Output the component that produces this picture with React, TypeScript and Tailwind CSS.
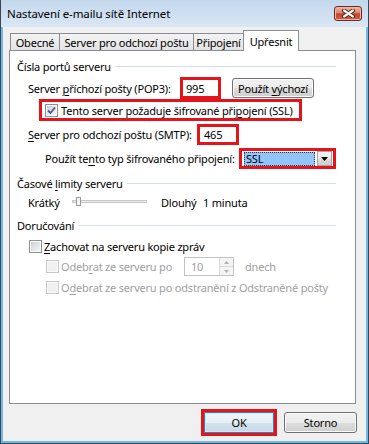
import type { ReactNode } from 'react'

function U({ children }: { children: ReactNode }) {
  return <span className="underline decoration-1 underline-offset-[2px]">{children}</span>
}

function RedBox({ className = '', children }: { className?: string; children?: ReactNode }) {
  return <div className={`border-[3px] border-[#e3141c] bg-white ${className}`}>{children}</div>
}

function Checkbox({ checked = false, disabled = false }: { checked?: boolean; disabled?: boolean }) {
  return (
    <span
      className={`relative block shrink-0 w-[13px] h-[13px] border p-px ${
        disabled ? 'border-[#c8c8c8] bg-[#fafafa]' : 'border-[#8e8f8f] bg-white'
      }`}
    >
      <span
        className={`block w-full h-full ${
          disabled ? 'bg-[#f0f0f0]' : 'bg-gradient-to-br from-[#cbcfd5] to-[#f6f6f6]'
        }`}
      />
      {checked && (
        <svg className="absolute left-0 top-0" width="11" height="11" viewBox="0 0 11 11">
          <path d="M2 5.5 L4.5 8 L9 2.5" fill="none" stroke="#4a5c8e" strokeWidth="1.8" />
        </svg>
      )}
    </span>
  )
}

function Group({ title }: { title: ReactNode }) {
  return (
    <div className="flex items-center h-[16px]">
      <span>{title}</span>
      <span className="flex-1 h-px bg-[#d5dfe5] ml-[4px]" />
    </div>
  )
}

function Button({ className = '', children }: { className?: string; children: ReactNode }) {
  return (
    <div
      className={`flex items-center justify-center rounded-[3px] border border-[#707070] shadow-[inset_0_0_0_1px_#fbfbfb] bg-[linear-gradient(to_bottom,#f2f2f2_0%,#ebebeb_50%,#dddddd_50%,#cfcfcf_100%)] ${className}`}
    >
      {children}
    </div>
  )
}

export default function App() {
  return (
    <div className="w-[369px] h-[444px] bg-[#3a4753] px-px pb-px flex flex-col font-['Noto_Sans',sans-serif] text-[11px] tracking-[-0.2px] leading-none text-black select-none">
      {/* Title bar */}
      <div className="h-[27px] shrink-0 flex items-center pl-[6px] pr-[6px] bg-gradient-to-b from-[#c3d7ec] to-[#dae7f4]">
        <span className="text-[11.5px] tracking-[-0.1px]">Nastavení e-mailu sítě Internet</span>
        <div className="ml-auto w-[28px] h-[15px] rounded-[3px] border border-[#6b2b20] flex items-center justify-center bg-[linear-gradient(to_bottom,#edb6a8_0%,#df826f_45%,#c6432b_52%,#d65e44_100%)] shadow-[inset_0_0_0_1px_#f0b4a6]">
          <svg width="13" height="9" viewBox="0 0 13 9">
            <path d="M2 1.5 L11 7.5 M11 1.5 L2 7.5" stroke="#4a1d15" strokeWidth="4" strokeLinecap="round" />
            <path d="M2 1.5 L11 7.5 M11 1.5 L2 7.5" stroke="#ffffff" strokeWidth="2.2" strokeLinecap="round" />
          </svg>
        </div>
      </div>

      {/* Body */}
      <div className="flex-1 flex flex-col bg-[#f0f0f0] border-l-2 border-r-2 border-b-2 border-[#6cbbe8]">
        {/* Tabs */}
        <div className="flex items-end h-[21px] mt-[3px] pl-[7px] -mb-px relative z-10">
          <div className="w-[50px] h-[17px] mb-px flex items-center justify-center border border-b-0 border-[#898c95] bg-gradient-to-b from-[#f3f3f3] to-[#e3e3e3]">
            Obecné
          </div>
          <div className="w-[135px] h-[17px] mb-px -ml-px flex items-center justify-center border border-b-0 border-[#898c95] bg-gradient-to-b from-[#f3f3f3] to-[#e3e3e3]">
            Server pro odchozí poštu
          </div>
          <div className="w-[51px] h-[17px] mb-px -ml-px flex items-center justify-center border border-b-0 border-[#898c95] bg-gradient-to-b from-[#f3f3f3] to-[#e3e3e3]">
            Připojení
          </div>
          <div className="w-[56px] h-[21px] -ml-px flex items-center justify-center border border-b-0 border-[#898c95] bg-white">
            Upřesnit
          </div>
        </div>

        {/* Tab panel */}
        <div className="ml-[6px] w-[347px] h-[354px] border border-[#898c95] bg-white pl-[7px] pr-[19px] pt-[7px] flex flex-col">
          <Group title="Čísla portů serveru" />

          <div className="flex items-center h-[22px] mt-[3px]">
            <span className="ml-[11px] w-[152px] shrink-0">
              Server <U>p</U>říchozí pošty (POP3):
            </span>
            <RedBox className="w-[41px] h-[22px] flex items-center pl-[3px]">995</RedBox>
            <Button className="ml-[11px] w-[82px] h-[20px]">
              Použít&nbsp;<U>v</U>ýchozí
            </Button>
          </div>

          <div className="flex h-[22px]">
            <RedBox className="ml-[22px] w-[263px] h-[22px] flex items-center pl-[3px]">
              <Checkbox checked />
              <span className="ml-[3px]">
                Tento server požaduje šifrované při<U>p</U>ojení (SSL)
              </span>
            </RedBox>
          </div>

          <div className="flex items-center h-[21px] mt-[3px]">
            <span className="ml-[11px] w-[169px] shrink-0">
              <U>S</U>erver pro odchozí poštu (SMTP):
            </span>
            <RedBox className="w-[42px] h-[21px] flex items-center pl-[4px]">465</RedBox>
          </div>

          <div className="flex items-center h-[21px] mt-[3px]">
            <span className="ml-[28px] w-[194px] shrink-0">
              Použít te<U>n</U>to typ šifrovaného připojení:
            </span>
            <RedBox className="w-[97px] h-[21px] flex items-center p-px">
              <div className="flex-1 h-[14px] ml-px bg-[#93c5fb] outline outline-1 outline-dotted outline-[#333] -outline-offset-1 flex items-center pl-[2px]">
                SSL
              </div>
              <div className="w-[15px] h-[15px] ml-[2px] border border-[#a5a5a5] flex items-center justify-center bg-[linear-gradient(to_bottom,#f4f4f4_0%,#e9e9e9_50%,#dbdbdb_50%,#cfcfcf_100%)]">
                <svg width="7" height="4" viewBox="0 0 7 4">
                  <path d="M0 0 H7 L3.5 4 Z" fill="#000" />
                </svg>
              </div>
            </RedBox>
          </div>

          <div className="mt-[6px]">
            <Group
              title={
                <>
                  Časové <U>l</U>imity serveru
                </>
              }
            />
          </div>

          <div className="flex items-center h-[16px] mt-[3px]">
            <span className="ml-[11px] w-[44px] shrink-0">Krátký</span>
            <div className="relative w-[75px] h-[16px] shrink-0">
              <div className="absolute left-0 right-0 top-[6px] h-[3px] border border-[#c9c9c9] bg-[#e7e7e7]" />
              <div className="absolute left-[4px] top-[3px] w-[5px] h-[9px] border border-[#9b9b9b] bg-[#f3f3f3]" />
            </div>
            <span className="ml-[14px] w-[42px] shrink-0">Dlouhý</span>
            <span>1 minuta</span>
          </div>

          <div className="mt-[7px]">
            <Group title="Doručování" />
          </div>

          <div className="flex items-center h-[16px] mt-[5px]">
            <span className="ml-[12px] flex">
              <Checkbox />
            </span>
            <span className="ml-[2px]">
              <U>Z</U>achovat na serveru kopie zpráv
            </span>
          </div>

          <div className="flex items-center h-[19px] mt-[3px] text-[#a0a0a0]">
            <span className="ml-[29px] flex">
              <Checkbox disabled />
            </span>
            <span className="ml-[2px] w-[123px] shrink-0">
              Odeb<U>r</U>at ze serveru po
            </span>
            <div className="w-[50px] h-[19px] border border-[#c3c3c3] bg-white flex items-center">
              <span className="pl-[6px] flex-1">10</span>
              <div className="w-[14px] h-full flex flex-col border-l border-[#d9d9d9]">
                <div className="flex-1 flex items-center justify-center border-b border-[#d9d9d9] bg-[#f4f4f4]">
                  <svg width="5" height="3" viewBox="0 0 5 3">
                    <path d="M0 3 H5 L2.5 0 Z" fill="#b0b0b0" />
                  </svg>
                </div>
                <div className="flex-1 flex items-center justify-center bg-[#f4f4f4]">
                  <svg width="5" height="3" viewBox="0 0 5 3">
                    <path d="M0 0 H5 L2.5 3 Z" fill="#b0b0b0" />
                  </svg>
                </div>
              </div>
            </div>
            <span className="ml-[11px]">dnech</span>
          </div>

          <div className="flex items-center h-[16px] mt-[3px] text-[#a0a0a0]">
            <span className="ml-[29px] flex">
              <Checkbox disabled />
            </span>
            <span className="ml-[2px]">
              O<U>d</U>ebrat ze serveru po odstranění z Odstraněné pošty
            </span>
          </div>
        </div>

        {/* Dialog buttons */}
        <div className="flex justify-end items-center h-[27px] mt-[5px] pr-[9px]">
          <div className="w-[76px] h-[27px] border-[3px] border-[#e3141c] flex">
            <div className="flex-1 flex items-center justify-center border border-[#3c7fb1] shadow-[inset_0_0_0_1px_#c8ecfb] bg-[linear-gradient(to_bottom,#f2f8fb_0%,#e6eff5_50%,#d4e3ec_50%,#c6d9e6_100%)]">
              OK
            </div>
          </div>
          <Button className="ml-[7px] w-[73px] h-[21px]">Storno</Button>
        </div>
      </div>
    </div>
  )
}
